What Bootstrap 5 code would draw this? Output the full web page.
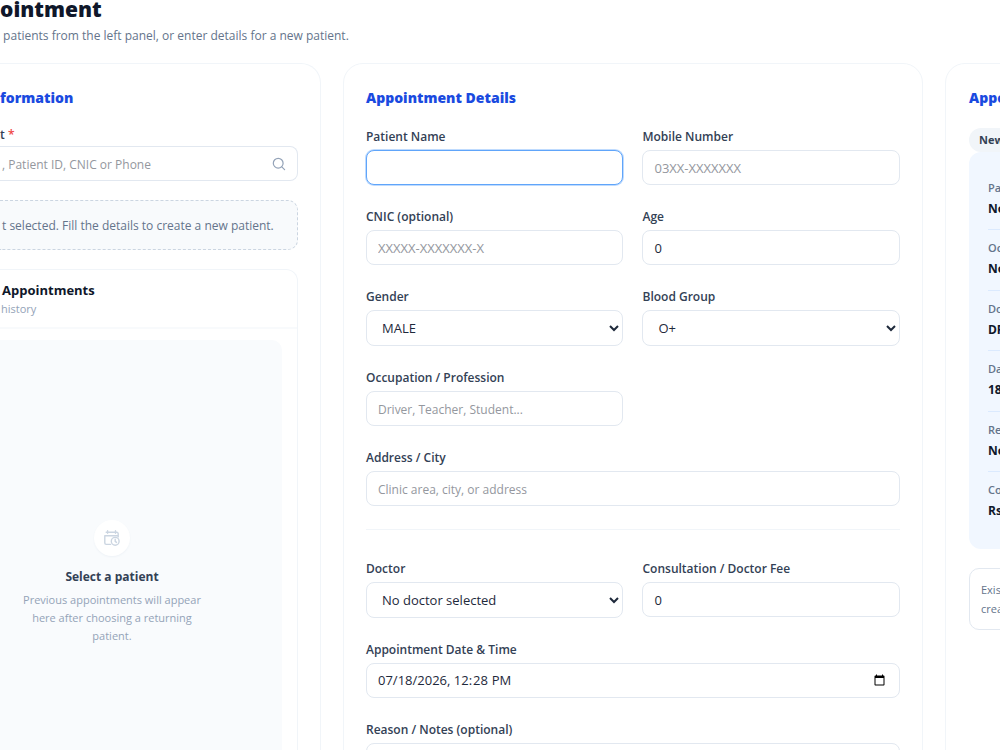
<!DOCTYPE html>
<html lang="en">
<head>
<meta charset="utf-8">
<meta name="viewport" content="width=device-width, initial-scale=1">
<title>Appointment</title>
<link href="https://cdn.jsdelivr.net/npm/bootstrap@5.3.0/dist/css/bootstrap.min.css" rel="stylesheet">
<style>
body { font-family: "Open Sans", "Noto Sans", sans-serif; font-size: 12px; line-height: 18px; color: #0f172a; background: #fff; }
.shell { height: 100vh; overflow: hidden; }
.page-title { font-size: 21px; line-height: 28px; font-weight: 800; margin: -5px 0 0; }
.page-sub { margin: 4px 0 18px; color: #64748b; }
.panels { display: grid; grid-template-columns: 32.1% 58% 340px; gap: 0 22px; align-items: start; }
.panel { border: 1px solid #f1f5f9; border-radius: 20px; padding: 24px 22px; min-height: 800px; background: #fff; }
.panel-left { border-left: 0; border-top-left-radius: 0; padding-left: 0; }
.panel-right { padding-left: 23px; }
.panel-title { font-size: 14px; line-height: 20px; font-weight: 800; color: #1a4ae0; margin: 0 0 20px; }
.field-label { display: block; font-weight: 600; color: #334155; margin: 0 0 4px; }
.panel-left .panel-title { margin-bottom: 18px; }
.panel-left .field-label { margin-bottom: 2px; }
.required { color: #ef4444; }
.form-control { font-size: 13px; line-height: 19px; padding: 7px 11px; border-color: #e2e8f0; border-radius: 8px; color: #1e293b; min-height: 35px; height: 35px; background: #fff; }
.form-control::placeholder { color: #94979e; }
.form-control.prose { font-size: 12px; padding: 8px 11px 6px; }
.form-control.is-current { border-color: #60a5fa; box-shadow: 0 0 0 1px #bfdbfe; }
select.form-control { appearance: auto; height: 36px; padding: 7px 0 7px 11px; }
.form-grid { display: grid; grid-template-columns: 1fr 1fr; gap: 23px 19px; }
.wide { grid-column: 1 / -1; }
.rule { border-top: 1px solid #f1f5f9; margin-bottom: 7px; }
.search-box .form-control { border-left: 0; border-radius: 0 8px 8px 0; padding-left: 2px; padding-right: 36px; }
.search-box svg { position: absolute; right: 12px; top: 11px; }
.notice { border: 1px dashed #cbd5e1; border-left: 0; border-radius: 0 10px 10px 0; background: #f8fafc; color: #64748b; padding: 16px 0 14px 2px; margin: 19px 0; height: 50px; }
.history { border: 1px solid #f1f5f9; border-left: 0; border-radius: 0 12px 0 0; }
.history-head { border-bottom: 2px solid #f8fafc; padding: 11px 0 9px 2px; }
.history-head h3 { font-size: 13px; line-height: 18px; font-weight: 700; margin: 0; }
.history-head p { font-size: 11px; line-height: 18px; color: #94a3b8; margin: 1px 0 0 -1px; }
.empty { background: #f9fbfd; border-radius: 0 10px 10px 0; margin: 11px 15px 12px 0; padding: 180px 58px 150px 0; text-align: center; }
.empty-icon { width: 36px; height: 36px; background: #fff; border-radius: 50%; box-shadow: 0 1px 2px #eef2f7; }
.empty h4 { font-size: 12px; line-height: 18px; font-weight: 700; color: #334155; margin: 12px 0 5px; }
.empty p { font-size: 11px; line-height: 18px; color: #94a3b8; max-width: 180px; margin: 0 auto; }
.tag { font-size: 11px; line-height: 18px; font-weight: 700; background: #f1f5f9; color: #334155; border-radius: 12px; padding: 3px 10px; }
.summary { background: #f1f7ff; border-radius: 12px; padding: 18px 19px; margin: 0 0 19px; height: 397px; }
.summary div { border-bottom: 1px solid #dbeafe; padding: 9px 0; height: 60px; }
.summary div:nth-child(even) { height: 61px; }
.summary div:last-child { border: 0; }
.summary dt { font-size: 11px; line-height: 18px; font-weight: 600; color: #64748b; }
.summary dd { font-size: 12px; line-height: 18px; font-weight: 700; margin: 3px 0 0; }
.hint { border: 1px solid #e2e8f0; border-radius: 10px; padding: 11px; font-size: 11px; line-height: 19px; color: #64748b; }
</style>
</head>
<body>
<main class="shell">
  <header>
    <h1 class="page-title">ointment</h1>
    <p class="page-sub">&nbsp;patients from the left panel, or enter details for a new patient.</p>
  </header>
  <div class="panels">
    <section class="panel panel-left">
      <h2 class="panel-title">formation</h2>
      <label class="field-label" for="search">t <span class="required">*</span></label>
      <div class="search-box position-relative">
        <input id="search" class="form-control prose" type="text" placeholder=", Patient ID, CNIC or Phone">
        <svg width="14" height="14" viewBox="0 0 14 14" fill="none" stroke="#94a3b8" stroke-width="1.2" stroke-linecap="round"><circle cx="6.2" cy="6.2" r="4.9"/><path d="M9.8 9.8 12.6 12.6"/></svg>
      </div>
      <div class="notice">t selected. Fill the details to create a new patient.</div>
      <div class="history">
        <div class="history-head">
          <h3>Appointments</h3>
          <p>history</p>
        </div>
        <div class="empty">
          <div class="empty-icon d-flex align-items-center justify-content-center mx-auto">
            <svg width="16" height="16" viewBox="0 0 16 16" fill="none" stroke="#cbd5e1" stroke-width="1.4" stroke-linecap="round" stroke-linejoin="round"><path d="M6.5 14.4H2.2a1.4 1.4 0 0 1-1.4-1.4V5.7h13.4v1.2M2.2 2.3h10.6a1.4 1.4 0 0 1 1.4 1.4v2M.8 5.7M3.6.7v2.6M11.5.7v2.6"/><circle cx="11.2" cy="11.3" r="3.9"/><path d="M11.2 9.3v2.1l1.3 1"/></svg>
          </div>
          <h4>Select a patient</h4>
          <p>Previous appointments will appear here after choosing a returning patient.</p>
        </div>
      </div>
    </section>

    <section class="panel">
      <h2 class="panel-title">Appointment Details</h2>
      <form class="form-grid">
        <div><label class="field-label" for="name">Patient Name</label><input id="name" class="form-control is-current" type="text"></div>
        <div><label class="field-label" for="mobile">Mobile Number</label><input id="mobile" class="form-control" type="text" placeholder="03XX-XXXXXXX"></div>
        <div><label class="field-label" for="cnic">CNIC (optional)</label><input id="cnic" class="form-control" type="text" placeholder="XXXXX-XXXXXXX-X"></div>
        <div><label class="field-label" for="age">Age</label><input id="age" class="form-control" type="number" value="0"></div>
        <div><label class="field-label" for="gender">Gender</label><select id="gender" class="form-control"><option>MALE</option></select></div>
        <div><label class="field-label" for="blood">Blood Group</label><select id="blood" class="form-control"><option>O+</option></select></div>
        <div><label class="field-label" for="job">Occupation / Profession</label><input id="job" class="form-control prose" type="text" placeholder="Driver, Teacher, Student..."></div>
        <div class="wide"><label class="field-label" for="address">Address / City</label><input id="address" class="form-control prose" type="text" placeholder="Clinic area, city, or address"></div>
        <div class="wide rule"></div>
        <div><label class="field-label" for="doctor">Doctor</label><select id="doctor" class="form-control"><option>No doctor selected</option></select></div>
        <div><label class="field-label" for="fee">Consultation / Doctor Fee</label><input id="fee" class="form-control" type="number" value="0"></div>
        <div class="wide"><label class="field-label" for="when">Appointment Date &amp; Time</label><input id="when" class="form-control" type="datetime-local" value="2026-07-18T12:28"></div>
        <div class="wide"><label class="field-label" for="notes">Reason / Notes (optional)</label><textarea id="notes" class="form-control" rows="3"></textarea></div>
      </form>
    </section>

    <aside class="panel panel-right">
      <h2 class="panel-title">Appointment</h2>
      <span class="tag d-table">New</span>
      <dl class="summary">
        <div><dt>Patient</dt><dd>Not selected</dd></div>
        <div><dt>Occupation</dt><dd>Not added</dd></div>
        <div><dt>Doctor</dt><dd>DR</dd></div>
        <div><dt>Date</dt><dd>18</dd></div>
        <div><dt>Reason</dt><dd>Not added</dd></div>
        <div><dt>Consultation</dt><dd>Rs</dd></div>
      </dl>
      <div class="hint">Existing<br>create</div>
    </aside>
  </div>
</main>
<script src="https://cdn.jsdelivr.net/npm/bootstrap@5.3.0/dist/js/bootstrap.bundle.min.js"></script>
</body>
</html>
